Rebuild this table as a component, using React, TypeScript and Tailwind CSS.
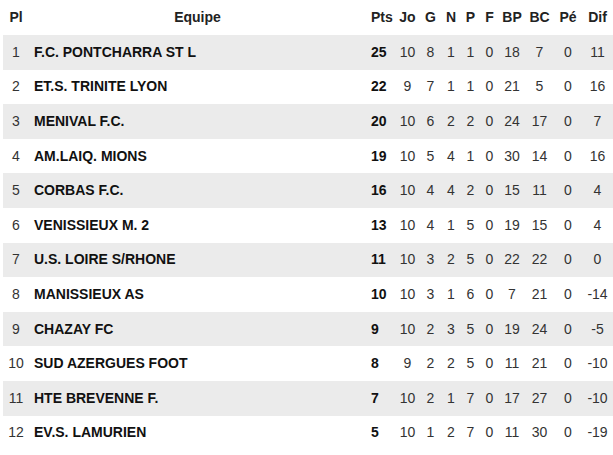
import React from "react";

const rows: [number, string, number, number, number, number, number, number, number, number, number, number][] = [
  [1, "F.C. PONTCHARRA ST L", 25, 10, 8, 1, 1, 0, 18, 7, 0, 11],
  [2, "ET.S. TRINITE LYON", 22, 9, 7, 1, 1, 0, 21, 5, 0, 16],
  [3, "MENIVAL F.C.", 20, 10, 6, 2, 2, 0, 24, 17, 0, 7],
  [4, "AM.LAIQ. MIONS", 19, 10, 5, 4, 1, 0, 30, 14, 0, 16],
  [5, "CORBAS F.C.", 16, 10, 4, 4, 2, 0, 15, 11, 0, 4],
  [6, "VENISSIEUX M. 2", 13, 10, 4, 1, 5, 0, 19, 15, 0, 4],
  [7, "U.S. LOIRE S/RHONE", 11, 10, 3, 2, 5, 0, 22, 22, 0, 0],
  [8, "MANISSIEUX AS", 10, 10, 3, 1, 6, 0, 7, 21, 0, -14],
  [9, "CHAZAY FC", 9, 10, 2, 3, 5, 0, 19, 24, 0, -5],
  [10, "SUD AZERGUES FOOT", 8, 9, 2, 2, 5, 0, 11, 21, 0, -10],
  [11, "HTE BREVENNE F.", 7, 10, 2, 1, 7, 0, 17, 27, 0, -10],
  [12, "EV.S. LAMURIEN", 5, 10, 1, 2, 7, 0, 11, 30, 0, -19],
];

const heads: [string, string][] = [
  ["Jo", "w-[25px]"],
  ["G", "w-[21px]"],
  ["N", "w-[20px]"],
  ["P", "w-[19px]"],
  ["F", "w-[19px]"],
  ["BP", "w-[26px]"],
  ["BC", "w-[29px]"],
  ["Pé", "w-[28px]"],
  ["Dif", "w-[31px]"],
];

export default function App() {
  return (
    <div
      className="w-[613px] h-[455px] bg-white overflow-hidden text-[14px] text-[#333]"
      style={{ fontFamily: '"Liberation Sans", Arial, sans-serif' }}
    >
      <table className="ml-[3px] w-[610px] border-collapse table-fixed">
        <thead>
          <tr className="h-[35px] text-[#222]">
            <th className="w-[26px] p-0 font-bold text-center whitespace-nowrap">Pl</th>
            <th className="w-[337px] p-0 font-bold text-center">Equipe</th>
            <th className="w-[29px] p-0 pl-[5px] font-bold text-left whitespace-nowrap">Pts</th>
            {heads.map(([h, w]) => (
              <th key={h} className={`${w} p-0 font-bold text-center whitespace-nowrap`}>
                {h}
              </th>
            ))}
          </tr>
        </thead>
        <tbody>
          {rows.map((r, i) => (
            <tr
              key={r[0]}
              className={i % 2 === 0 ? "h-[34.6px] bg-[#ebebeb]" : "h-[34.6px] bg-white"}
            >
              <td className="p-0 text-center">{r[0]}</td>
              <td className="p-0 pl-[5px] text-left font-bold text-[#111] whitespace-nowrap">{r[1]}</td>
              <td className="p-0 pl-[5px] text-left font-bold text-[#111]">{r[2]}</td>
              {r.slice(3).map((v, j) => (
                <td key={j} className="p-0 text-center whitespace-nowrap">
                  {v}
                </td>
              ))}
            </tr>
          ))}
        </tbody>
      </table>
    </div>
  );
}
